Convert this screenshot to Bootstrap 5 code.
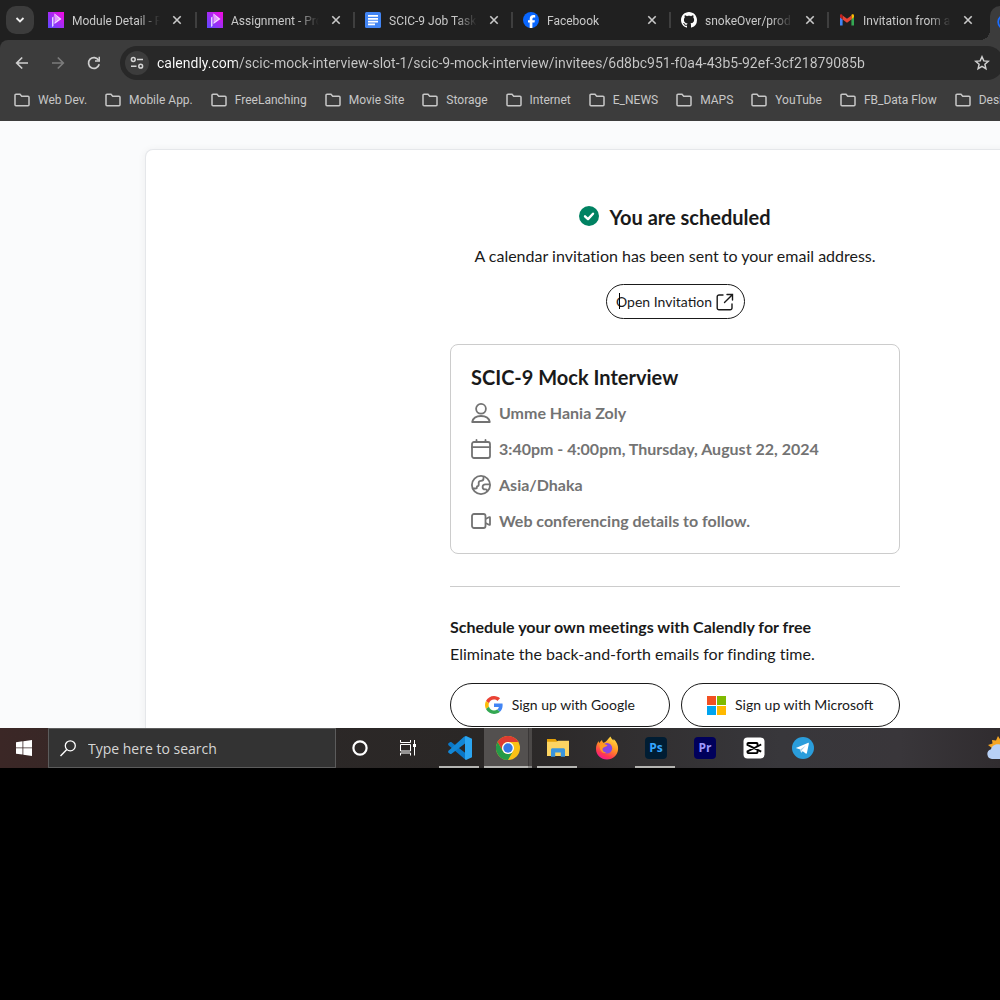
<!DOCTYPE html>
<html lang="en">
<head>
<meta charset="utf-8">
<meta name="viewport" content="width=device-width, initial-scale=1">
<title>Calendly</title>
<link href="https://cdn.jsdelivr.net/npm/bootstrap@5.3.0/dist/css/bootstrap.min.css" rel="stylesheet">
<script src="https://cdn.jsdelivr.net/npm/bootstrap@5.3.0/dist/js/bootstrap.bundle.min.js"></script>
<style>
  body { background: #000; font-family: "Open Sans", "Noto Sans", sans-serif; font-size: 12px; overflow-x: hidden; }
  button { font-family: inherit; }
  svg { display: block; flex: none; }
  .plain-btn { background: none; border: 0; padding: 0; color: inherit; display: flex; align-items: center; justify-content: center; }

  /* browser window */
  .browser-head { font-family: Roboto, "Open Sans", sans-serif; }
  .tab-strip { background: #202020; height: 40px; color: #c9c9c9; }
  .tab-menu { width: 28px; height: 28px; border-radius: 10px; background: #3c3c3c; margin: 0 4px 0 6px; }
  .browser-tab { width: 158px; flex: none; padding-left: 5px; }
  .browser-tab + .browser-tab::before { content: ""; width: 2px; height: 16px; background: #3f3f3f; margin-left: -6px; margin-right: 4px; }
  .browser-tab a { color: inherit; width: 112px; gap: 8px; margin-left: 5px; }
  .browser-tab + .browser-tab a { margin-left: 6px; }
  .tab-title { flex: 1; line-height: 18px; padding-top: 1px; white-space: nowrap; overflow: hidden; -webkit-mask-image: linear-gradient(90deg, #000 66px, transparent 88px); mask-image: linear-gradient(90deg, #000 66px, transparent 88px); }
  .browser-tab .plain-btn { width: 16px; height: 16px; margin-left: 9px; }
  .current-tab { position: relative; align-self: flex-end; width: 60px; height: 34px; flex: none; margin-left: 4px; padding-left: 7px; background: #3c3c3c; border-radius: 10px 0 0 0; }
  .current-tab::before { content: ""; position: absolute; left: -10px; bottom: 0; width: 10px; height: 10px; background: radial-gradient(circle at 0 0, #202020 10px, #3c3c3c 10px); }
  .toolbar-wrap { background: #202020; }
  .toolbar { background: #3c3c3c; border-radius: 8px 0 0 0; height: 81px; color: #c7c7c7; padding-top: 6px; }
  .nav-tools { gap: 20px; padding: 0 18px 0 14px; }
  .omnibox { background: #282828; height: 34px; border-radius: 17px; margin-right: -4px; padding: 0 14px 0 5px; }
  .site-info { width: 24px; height: 24px; border-radius: 12px; background: #3c3c3c; flex: none; }
  .url-field { border: 0; outline: 0; padding: 0; margin-left: 8px; font-size: 14px; color: transparent; background: linear-gradient(90deg, #fff 80px, #c9c9c9 80px); -webkit-background-clip: text; background-clip: text; }
  .bookmarks { height: 40px; padding-left: 14px; gap: 18px; white-space: nowrap; }
  .bookmarks a { color: #c7c7c7; gap: 8px; }

  /* page */
  .page-area { background: #fafbfc; padding-top: 28px; color: #1a1a1a; font-family: Lato, "Open Sans", sans-serif; font-size: 16px; line-height: 24px; font-variant-ligatures: none; }
  .sheet { background: #fff; border: 1px solid #e5e7ea; border-bottom: 0; border-radius: 8px 8px 0 0; margin-left: 145px; margin-right: -205px; padding: 55px 0 1px; box-shadow: 0 1px 8px rgba(0,0,0,.06); }
  .booking { max-width: 450px; }
  .big-title { font-size: 20px; line-height: 24px; font-weight: 700; }
  .status-title { gap: 10px; margin-bottom: 15px; }
  .pill { background: #fff; border: 1px solid #1a1a1a; border-radius: 22px; color: #1a1a1a; font-size: 14px; padding: 0; }
  .pill-open { height: 35px; width: 139px; gap: 4px; }
  .text-caret { position: absolute; left: 12px; top: 8px; width: 1px; height: 16px; background: #000; }
  .details { border: 1px solid #ccc; border-radius: 8px; padding: 20px; gap: 12px; margin-top: 25px; }
  .details-list { gap: 12px; }
  .details-list li { color: #737373; font-weight: 700; gap: 8px; }
  .rule { border-top: 1px solid #ccc; margin: 32px 0 28px; }
  .own-title { line-height: 24px; margin-bottom: 3px; }
  .signup-row { gap: 11px; margin-top: 17px; }
  .pill-signup { height: 44px; flex: 1 1 0; gap: 9px; }

  /* taskbar */
  .taskbar { height: 40px; background: linear-gradient(90deg, #3b2726 0, #2c2827 25%, #2a2726 50%, #38373b 78%, #39363a 90%, #302c2f 100%); color: #fff; }
  .start-btn { width: 48px; }
  .search-box { width: 288px; background: #333; border: 1px solid #5c5c5c; padding-left: 11px; gap: 12px; }
  .search-box input { background: none; border: 0; outline: 0; padding: 0; color: #fff; font-size: 14px; }
  .search-box input::placeholder { color: #d6d6d6; opacity: 1; }
  .system-btn { width: 48px; }
  .task-list { margin-left: 3px; }
  .task-btn { width: 49px; height: 40px; flex: none; position: relative; }
  .task-btn.is-open::after { content: ""; position: absolute; left: 4px; width: 40px; bottom: 0; height: 2px; background: #b5b5b2; }
  .task-btn.is-active { background: linear-gradient(90deg, #53504f 44px, #3a3737 44px, #3a3737 45px, #4b4847 45px); width: 48px; margin-right: 1px; }
  .task-btn.is-active::after { left: 0; width: 48px; background: linear-gradient(90deg, #b5b5b2 44px, #8a8987 44px); }
  .weather-btn { margin-right: -13px; }
</style>
</head>
<body>

<svg width="0" height="0" class="position-absolute" aria-hidden="true">
  <defs>
    <linearGradient id="ph" x1="0" y1="1" x2="1" y2="0"><stop offset="0" stop-color="#5a4bff"/><stop offset=".5" stop-color="#a32bf5"/><stop offset="1" stop-color="#f907e0"/></linearGradient>
    <symbol id="i-ph" viewBox="0 0 16 16"><path fill="url(#ph)" d="M0 0h16v16H0z"/><path fill="#e3d4ff" d="M4 5.500 5.500 4.500V14L4 15z"/><path d="M6.500 1.500 13.500 7 6.500 12V10L10.500 7 6.500 4.500z" fill="#f3d9ff"/><path d="M6.500 1.500 11 7 6.500 10z" fill="#e39bfb"/></symbol>
    <symbol id="i-x" viewBox="0 0 10 10"><path d="m1.300 1.300 7.400 7.400m0-7.400L1.300 8.700" stroke="currentColor" stroke-width="1.600" fill="none"/></symbol>
    <symbol id="i-folder" viewBox="0 0 16 14"><path d="M1 11.700V2.300C1 1.600 1.400 1.200 2 1.200h4l1.700 2h6.300c.6 0 1 .4 1 1v7.500c0 .6-.4 1-1 1H2c-.6 0-1-.4-1-1z" fill="none" stroke="currentColor" stroke-width="1.500"/></symbol>
  </defs>
</svg>

<header class="browser-head">
  <nav class="tab-strip d-flex align-items-center overflow-hidden" aria-label="Tabs">
    <button class="plain-btn tab-menu flex-shrink-0" aria-label="Search tabs"><svg width="10" height="8" viewBox="0 0 10 8"><path d="m1.500 2 3.500 3.500L8.500 2" fill="none" stroke="#eee" stroke-width="1.800"/></svg></button>
    <div class="browser-tab d-flex align-items-center">
      <a href="#" class="d-flex align-items-center text-decoration-none"><svg width="16" height="16"><use href="#i-ph"/></svg><span class="tab-title">Module Detail - P</span></a>
      <button class="plain-btn" aria-label="Close tab"><svg width="10" height="10"><use href="#i-x"/></svg></button>
    </div>
    <div class="browser-tab d-flex align-items-center">
      <a href="#" class="d-flex align-items-center text-decoration-none"><svg width="16" height="16"><use href="#i-ph"/></svg><span class="tab-title">Assignment - Pro</span></a>
      <button class="plain-btn" aria-label="Close tab"><svg width="10" height="10"><use href="#i-x"/></svg></button>
    </div>
    <div class="browser-tab d-flex align-items-center">
      <a href="#" class="d-flex align-items-center text-decoration-none"><svg width="16" height="16" viewBox="0 0 16 16"><rect width="16" height="16" rx="1.500" fill="#4285f4"/><path d="M3 3h10v1.800H3zm0 2.900h10v1.800H3zm0 2.800h10v1.800H3zm0 2.800h7v1.800H3z" fill="#fff"/></svg><span class="tab-title">SCIC-9 Job Task</span></a>
      <button class="plain-btn" aria-label="Close tab"><svg width="10" height="10"><use href="#i-x"/></svg></button>
    </div>
    <div class="browser-tab d-flex align-items-center">
      <a href="#" class="d-flex align-items-center text-decoration-none"><svg width="16" height="16" viewBox="0 0 16 16"><circle cx="8" cy="8" r="8" fill="#0866ff"/><path d="M6.700 15.900v-5.300H5V8.200h1.700V7.100c0-2.800 1.300-4.100 4-4.100.5 0 1.100.1 1.500.2v2.200h-1.100c-1.300 0-1.700.5-1.700 1.700v1.100h2.500l-.4 2.400H9.400v5.300a8 8 0 0 1-2.700 0z" fill="#fff"/></svg><span class="tab-title">Facebook</span></a>
      <button class="plain-btn" aria-label="Close tab"><svg width="10" height="10"><use href="#i-x"/></svg></button>
    </div>
    <div class="browser-tab d-flex align-items-center">
      <a href="#" class="d-flex align-items-center text-decoration-none"><svg width="16" height="16" viewBox="0 0 16 16"><path fill="#fff" d="M8 0C3.580 0 0 3.580 0 8c0 3.540 2.290 6.530 5.470 7.590.4.070.55-.17.55-.38 0-.19-.01-.82-.01-1.490-2.010.37-2.530-.49-2.690-.94-.09-.23-.48-.94-.82-1.130-.28-.15-.68-.52-.01-.53.63-.01 1.080.58 1.230.82.72 1.210 1.870.87 2.330.66.07-.52.28-.87.51-1.070-1.780-.2-3.640-.89-3.640-3.950 0-.87.31-1.590.82-2.150-.08-.2-.36-1.020.08-2.120 0 0 .67-.21 2.200.82.64-.18 1.320-.27 2-.27s1.360.09 2 .27c1.530-1.040 2.200-.82 2.200-.82.44 1.100.16 1.920.08 2.120.51.56.82 1.270.82 2.150 0 3.070-1.870 3.750-3.650 3.950.29.25.54.73.54 1.480 0 1.070-.01 1.930-.01 2.200 0 .21.15.46.55.38A8.010 8.010 0 0 0 16 8c0-4.420-3.580-8-8-8z"/></svg><span class="tab-title">snokeOver/prod</span></a>
      <button class="plain-btn" aria-label="Close tab"><svg width="10" height="10"><use href="#i-x"/></svg></button>
    </div>
    <div class="browser-tab d-flex align-items-center">
      <a href="#" class="d-flex align-items-center text-decoration-none"><svg width="16" height="16" viewBox="0 0 16 16"><path fill="#4285f4" d="M1 13.500h2.600V7.300L1 5z"/><path fill="#34a853" d="M12.400 13.500H15V5l-2.600 2.300z"/><path fill="#fbbc04" d="M12.400 3.400v4L15 5.300V3.600c0-1.300-1.300-1.800-2.300-1z"/><path fill="#ea4335" d="M3.600 7.400v-4L8 6.700l4.400-3.300v4L8 10.700z"/><path fill="#c5221f" d="M1 3.600v1.700l2.600 2.100v-4l-.6-.8c-1-.7-2-.1-2 1z"/></svg><span class="tab-title">Invitation from a</span></a>
      <button class="plain-btn" aria-label="Close tab"><svg width="10" height="10"><use href="#i-x"/></svg></button>
    </div>
    <a href="#" class="current-tab d-flex align-items-center" aria-label="Calendly"><svg width="16" height="16" viewBox="0 0 16 16"><circle cx="8" cy="7" r="6.800" fill="none" stroke="#1a6dff" stroke-width="1.800"/></svg></a>
  </nav>

  <div class="toolbar-wrap overflow-hidden">
    <div class="toolbar">
      <div class="d-flex align-items-center">
        <div class="nav-tools d-flex align-items-center">
          <button class="plain-btn" aria-label="Back"><svg width="16" height="16" viewBox="0 0 16 16"><path d="M14 8H3m5.200-5.500L2.700 8l5.500 5.500" fill="none" stroke="#cfcfcf" stroke-width="1.700"/></svg></button>
          <button class="plain-btn" aria-label="Forward"><svg width="16" height="16" viewBox="0 0 16 16"><path d="M2 8h11M7.800 2.500 13.300 8l-5.500 5.500" fill="none" stroke="#7b7b7b" stroke-width="1.700"/></svg></button>
          <button class="plain-btn" aria-label="Reload"><svg width="16" height="16" viewBox="0 0 16 16"><path d="M13.200 9.300A5.400 5.400 0 1 1 12.600 5.200" fill="none" stroke="#cfcfcf" stroke-width="1.700"/><path d="M14 1.800v5H9V5.300h3.500V1.800z" fill="#cfcfcf"/></svg></button>
        </div>
        <div class="omnibox d-flex align-items-center flex-grow-1">
          <button class="plain-btn site-info" aria-label="Site information"><svg width="14" height="14" viewBox="0 0 14 14" fill="none" stroke="#d5d5d5" stroke-width="1.500"><circle cx="3.300" cy="3.500" r="1.900"/><path d="M7 3.500h6M1 10.200h5.500"/><circle cx="10.700" cy="10.200" r="1.900"/></svg></button>
          <input class="url-field flex-grow-1" type="text" aria-label="Address" value="calendly.com/scic-mock-interview-slot-1/scic-9-mock-interview/invitees/6d8bc951-f0a4-43b5-92ef-3cf21879085b">
          <button class="plain-btn" aria-label="Bookmark"><svg width="16" height="16" viewBox="0 0 16 16"><path d="m8 1.800 1.800 4.100 4.500.4-3.400 3 1 4.400L8 11.400l-3.900 2.300 1-4.400-3.400-3 4.500-.4z" fill="none" stroke="#d0d0d0" stroke-width="1.500"/></svg></button>
        </div>
      </div>
      <nav class="bookmarks d-flex align-items-center" aria-label="Bookmarks">
        <a href="#" class="d-flex align-items-center text-decoration-none"><svg width="16" height="14"><use href="#i-folder"/></svg>Web Dev.</a>
        <a href="#" class="d-flex align-items-center text-decoration-none"><svg width="16" height="14"><use href="#i-folder"/></svg>Mobile App.</a>
        <a href="#" class="d-flex align-items-center text-decoration-none"><svg width="16" height="14"><use href="#i-folder"/></svg>FreeLanching</a>
        <a href="#" class="d-flex align-items-center text-decoration-none"><svg width="16" height="14"><use href="#i-folder"/></svg>Movie Site</a>
        <a href="#" class="d-flex align-items-center text-decoration-none"><svg width="16" height="14"><use href="#i-folder"/></svg>Storage</a>
        <a href="#" class="d-flex align-items-center text-decoration-none"><svg width="16" height="14"><use href="#i-folder"/></svg>Internet</a>
        <a href="#" class="d-flex align-items-center text-decoration-none"><svg width="16" height="14"><use href="#i-folder"/></svg>E_NEWS</a>
        <a href="#" class="d-flex align-items-center text-decoration-none"><svg width="16" height="14"><use href="#i-folder"/></svg>MAPS</a>
        <a href="#" class="d-flex align-items-center text-decoration-none"><svg width="16" height="14"><use href="#i-folder"/></svg>YouTube</a>
        <a href="#" class="d-flex align-items-center text-decoration-none"><svg width="16" height="14"><use href="#i-folder"/></svg>FB_Data Flow</a>
        <a href="#" class="d-flex align-items-center text-decoration-none"><svg width="16" height="14"><use href="#i-folder"/></svg>Design</a>
      </nav>
    </div>
  </div>
</header>

<main class="page-area overflow-hidden">
  <div class="sheet">
    <div class="booking mx-auto">
      <div class="d-flex flex-column align-items-center">
        <h1 class="big-title status-title d-flex align-items-center"><svg width="20" height="22" viewBox="0 0 20 22"><circle cx="10" cy="10" r="10" fill="#008262"/><path d="m6 10.300 3 2.800 5-5.400" fill="none" stroke="#fff" stroke-width="2.400" stroke-linecap="round" stroke-linejoin="round"/></svg>You are scheduled</h1>
        <p class="mb-0">A calendar invitation has been sent to your email address.</p>
        <button class="pill pill-open position-relative d-flex align-items-center justify-content-center mt-3"><span class="text-caret"></span>Open Invitation<svg width="18" height="18" viewBox="0 0 18 18"><path d="M7 2H3a1.800 1.800 0 0 0-1.800 1.800V15A1.800 1.800 0 0 0 3 16.800h11.200A1.800 1.800 0 0 0 16 15v-4M11 1.500h5.500V7M16.300 1.700 8.500 9.500" fill="none" stroke="#1a1a1a" stroke-width="1.400" stroke-linecap="round"/></svg></button>
      </div>

      <section class="details d-flex flex-column">
        <h2 class="big-title mb-0">SCIC-9 Mock Interview</h2>
        <ul class="details-list list-unstyled d-flex flex-column mb-0">
          <li class="d-flex align-items-center"><svg width="20" height="20" viewBox="0 0 20 20" fill="none" stroke="#737373" stroke-width="1.800" stroke-linejoin="round"><circle cx="10" cy="5.800" r="4.900"/><path d="M1.200 19c.8-3.900 4.300-6 8.800-6s8 2.100 8.800 6z"/></svg>Umme Hania Zoly</li>
          <li class="d-flex align-items-center"><svg width="20" height="20" viewBox="0 0 20 20" fill="none" stroke="#737373" stroke-width="1.800" stroke-linecap="round"><rect x="1" y="3" width="18" height="16" rx="2"/><path d="M1 8.200h18M5.500 1v2M14.500 1v2"/></svg>3:40pm - 4:00pm, Thursday, August 22, 2024</li>
          <li class="d-flex align-items-center"><svg width="20" height="20" viewBox="0 0 20 20" fill="none" stroke="#737373" stroke-width="1.800" stroke-linejoin="round"><circle cx="10" cy="10" r="9.100"/><path d="M12.500 1.300v2.200c0 1.600-1.200 2.300-2.500 2.300-1.500 0-2.300.8-2.300 2v1.700c0 1.200-.7 1.800-1.700 1.800v.6c0 1-.6 1.600-1.600 1.600H2M18.900 9.300h-4.500c-1.700 0-2.800 1-2.800 2.600 0 1.500 1 2.500 2.600 2.500h.8c.6 0 1 .4 1 1v1.500"/></svg>Asia/Dhaka</li>
          <li class="d-flex align-items-center"><svg width="20" height="20" viewBox="0 0 20 20" fill="none" stroke="#737373" stroke-width="1.800" stroke-linejoin="round"><rect x="1" y="3" width="13.500" height="14" rx="2"/><path d="M14.500 8 18 6.200c.6-.3 1-.1 1 .6v6.400c0 .7-.4.9-1 .6L14.500 12"/></svg>Web conferencing details to follow.</li>
        </ul>
      </section>

      <div class="rule"></div>

      <h2 class="fs-6 fw-bold own-title">Schedule your own meetings with Calendly for free</h2>
      <p class="mb-0">Eliminate the back-and-forth emails for finding time.</p>
      <div class="d-flex signup-row">
        <button class="pill pill-signup d-flex align-items-center justify-content-center"><svg width="18" height="18" viewBox="0 0 48 48"><path fill="#EA4335" d="M24 9.500c3.540 0 6.710 1.220 9.210 3.600l6.850-6.850C35.900 2.380 30.470 0 24 0 14.620 0 6.510 5.380 2.560 13.220l7.980 6.190C12.430 13.720 17.740 9.500 24 9.500z"/><path fill="#4285F4" d="M46.980 24.550c0-1.570-.15-3.090-.38-4.550H24v9.020h12.940c-.58 2.960-2.260 5.480-4.780 7.180l7.730 6c4.510-4.180 7.090-10.360 7.090-17.650z"/><path fill="#FBBC05" d="M10.530 28.590c-.48-1.450-.76-2.990-.76-4.590s.27-3.140.76-4.590l-7.980-6.190C.92 16.460 0 20.120 0 24c0 3.880.92 7.540 2.560 10.780l7.970-6.190z"/><path fill="#34A853" d="M24 48c6.480 0 11.930-2.130 15.890-5.810l-7.730-6c-2.150 1.450-4.920 2.300-8.160 2.300-6.260 0-11.570-4.220-13.470-9.910l-7.980 6.190C6.510 42.620 14.620 48 24 48z"/></svg>Sign up with Google</button>
        <button class="pill pill-signup d-flex align-items-center justify-content-center"><svg width="19" height="19" viewBox="0 0 19 19"><path fill="#f25022" d="M0 0h9v9H0z"/><path fill="#7fba00" d="M10 0h9v9h-9z"/><path fill="#00a4ef" d="M0 10h9v9H0z"/><path fill="#ffb900" d="M10 10h9v9h-9z"/></svg>Sign up with Microsoft</button>
      </div>
    </div>
  </div>
</main>

<footer class="taskbar d-flex overflow-hidden">
  <button class="plain-btn start-btn flex-shrink-0" aria-label="Start"><svg width="16" height="16" viewBox="0 0 16 16"><path fill="#fff" d="M0 2.200 6.500 1.300v6.200H0zM7.300 1.200 16 0v7.500H7.300zM0 8.300h6.500v6.300L0 13.700zM7.300 8.300H16V16l-8.700-1.200z"/></svg></button>
  <label class="search-box d-flex align-items-center flex-shrink-0"><svg width="16" height="17" viewBox="0 0 16 17"><circle cx="10.300" cy="5.800" r="5" fill="none" stroke="#fff" stroke-width="1.300"/><path d="M6.800 9.500.5 16" stroke="#fff" stroke-width="1.400"/></svg><input class="flex-grow-1" type="text" placeholder="Type here to search" aria-label="Type here to search"></label>
  <button class="plain-btn system-btn flex-shrink-0" aria-label="Cortana"><svg width="16" height="16" viewBox="0 0 16 16"><circle cx="8" cy="8" r="6.600" fill="none" stroke="#fff" stroke-width="2.200"/></svg></button>
  <button class="plain-btn system-btn flex-shrink-0" aria-label="Task view"><svg width="16" height="16" viewBox="0 0 16 16" fill="none" stroke="#fff"><path d="M.5 0v2.500h10V0M.5 15.500V13h10v2.500M14.500 0v15.500"/><path d="M.5 4.500h10v6.500H.5z"/><path d="M13 4h3v3h-3z" fill="#fff" stroke="none"/></svg></button>
  <div class="task-list d-flex">
    <button class="plain-btn task-btn is-open" aria-label="Visual Studio Code"><svg width="24" height="24" viewBox="0 0 24 24"><path fill="#0a78c8" d="M2.200 6 .2 7.400v1.500L16 22.500 18 24v-6.500L3.200 6.100q-.5-.4-1 0z"/><path fill="#1387d6" d="M18 0v6.800L3.200 17.900q-.5.400-1 0L.2 16.500V15L16 .8z"/><path fill="#2ba5f1" d="M18 0 24 2.800v18.400L18 24l-1-1V1z"/></svg></button>
    <button class="plain-btn task-btn is-open is-active" aria-label="Google Chrome"><svg width="24" height="24" viewBox="0 0 24 24"><circle cx="12" cy="12" r="12" fill="#fbc116"/><path fill="#dd3b31" d="M1.600 6A12 12 0 0 1 22.400 6H12a6 6 0 0 0-5.200 9z"/><path fill="#249a48" d="M1.600 6 6.800 15A6 6 0 0 0 17.200 15L12 24A12 12 0 0 1 1.600 6z"/><circle cx="12" cy="12" r="6" fill="#fff"/><circle cx="12" cy="12" r="4.700" fill="#3578e5"/></svg></button>
    <button class="plain-btn task-btn is-open" aria-label="File Explorer"><svg width="22" height="20" viewBox="0 0 22 20"><path fill="#e3a008" d="M0 2.500V1h8.500l1.500 2h12v2H0z"/><path fill="#fcd462" d="M0 3.800h10l1-1h11V18H0z"/><path fill="#3a95dd" d="M4 18.700v-6.900c0-1 .6-1.600 1.600-1.600h10.800c1 0 1.600.6 1.600 1.600v6.900h-4.200v-4.200H8.200v4.200z"/></svg></button>
    <button class="plain-btn task-btn" aria-label="Firefox"><svg width="24" height="24" viewBox="0 0 24 24"><defs><linearGradient id="fx" x1=".8" y1="0" x2=".3" y2="1"><stop offset="0" stop-color="#ffe34a"/><stop offset=".45" stop-color="#ff9622"/><stop offset=".8" stop-color="#ff3750"/><stop offset="1" stop-color="#f2169a"/></linearGradient></defs><path fill="url(#fx)" d="M15.500.5c.8 1.700 1.500 2.700 3 4 0-.6 0-1 .2-1.500 3 3 4.600 6 4.400 10C22.800 19 18 23.500 12 23.500S1 19 1 13c0-3 .9-5.500 2.500-8 .2 1 .4 1.500.8 2 .8-1.400 1.800-2.400 2.700-3 .1 1.200.6 2 1.200 2.700 3.300-.3 4.300-3.700 7.300-6.200z"/><circle cx="12" cy="12.300" r="5.200" fill="#8846e4"/><path d="M4.500 8.500c3-1.700 5.500-.5 8 .7-1 1.800-3.200 1.500-4.500 2.800-1.300 1.500 0 4.500 3.500 4.500-3.500 1.500-7-1-7-8z" fill="#ff9a20"/></svg></button>
    <button class="plain-btn task-btn is-open" aria-label="Photoshop"><svg width="22" height="22" viewBox="0 0 22 22"><rect width="22" height="22" rx="4" fill="#001d33"/><text x="11" y="15" text-anchor="middle" font-size="12" font-weight="700" font-family="Open Sans" fill="#35a7ff">Ps</text></svg></button>
    <button class="plain-btn task-btn" aria-label="Premiere Pro"><svg width="22" height="22" viewBox="0 0 22 22"><rect width="22" height="22" rx="4" fill="#00005b"/><text x="11" y="15" text-anchor="middle" font-size="12" font-weight="700" font-family="Open Sans" fill="#9c98ff">Pr</text></svg></button>
    <button class="plain-btn task-btn" aria-label="CapCut"><svg width="22" height="22" viewBox="0 0 22 22"><rect x=".5" y=".5" width="21" height="21" rx="4" fill="#fff"/><path d="M18.200 7.500 14.500 9.300V6.800c0-.5-.3-.8-.8-.8H5.300c-.5 0-.8.3-.8.8v1l13.700 6.800M18.200 7.500 4.500 14.300v1c0 .5.3.8.8.8h8.400c.5 0 .8-.3.8-.8v-2.500" fill="none" stroke="#000" stroke-width="1.900"/></svg></button>
    <button class="plain-btn task-btn" aria-label="Telegram"><svg width="22" height="22" viewBox="0 0 22 22"><circle cx="11" cy="11" r="11" fill="#2a9ddb"/><path d="m3.800 10.900 12-5c.7-.2 1.200.1 1 1l-1.900 9.200c-.2.700-.6.900-1.200.5l-3-2.300-1.600 1.500-.8-3.200z" fill="#fff"/><path d="m8.300 12.600 5.600-4.100-4.200 4.700-.6 2.600z" fill="#a9cfe6"/></svg></button>
  </div>
  <button class="plain-btn weather-btn ms-auto flex-shrink-0" aria-label="Weather"><svg width="26" height="24" viewBox="0 0 26 24"><path fill="#f5a623" d="m11 0 2.200 3.500L17 2v6l3 4-9 6-7-3 1-3-4-3 4.500-1.500L5 4l4 .5z"/><path fill="#b7d0f5" d="M5 23a5 5 0 0 1-1-9.800C5 8.500 11 7 14 9c6-2 10 3 9 7 2 4 0 7-3 7z"/></svg></button>
</footer>
</body>
</html>
